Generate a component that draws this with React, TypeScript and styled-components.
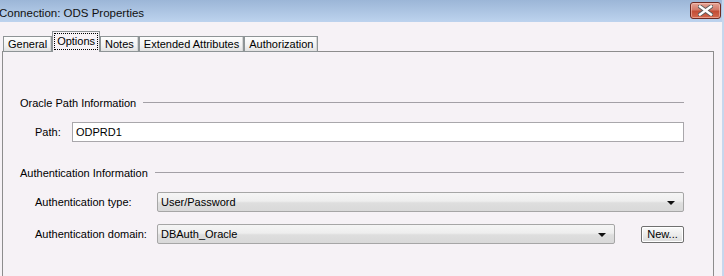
import React from "react";
import styled, { createGlobalStyle } from "styled-components";

const Global = createGlobalStyle`
  html, body { margin: 0; padding: 0; background: #f6f2f6; }
  body { font-family: "Liberation Sans", Arial, sans-serif; font-size: 11px; color: #000; }
  * { box-sizing: border-box; }
`;

const Window = styled.div`
  width: 724px;
  height: 276px;
  overflow: hidden;
  display: flex;
  flex-direction: column;
  background: #f6f2f6;
  border-right: 2px solid #c6d7ed;
`;

const TitleBar = styled.div`
  height: 22px;
  flex: none;
  display: flex;
  align-items: center;
  justify-content: space-between;
  padding: 0 1px 0 0;
  background: linear-gradient(#9cb6d7, #bdd3ee);
`;

const Title = styled.div`
  font-size: 11.5px;
  margin-left: -1px;
  margin-top: 3px;
  color: #111;
`;

const CloseButton = styled.div`
  width: 31px;
  height: 17px;
  margin-top: -2px;
  border: 1px solid #6e2a22;
  border-radius: 3px;
  background: linear-gradient(#e5a597 0%, #d37a69 45%, #c24d36 55%, #d46a4f 100%);
  display: flex;
  align-items: center;
  justify-content: center;
  box-shadow: inset 0 0 0 1px rgba(255, 210, 200, 0.5);
`;

const Body = styled.div`
  flex: 1;
  display: flex;
  flex-direction: column;
  padding: 9px 8px 0 2px;
`;

const TabStrip = styled.div`
  display: flex;
  align-items: flex-end;
  height: 21px;
  padding-left: 1px;
  margin-bottom: -1px;
  position: relative;
  z-index: 1;
`;

const Tab = styled.div<{ $active?: boolean }>`
  height: ${(p) => (p.$active ? "21px" : "16px")};
  padding: ${(p) => (p.$active ? "0 1px 2px" : "0 4px")};
  display: flex;
  align-items: center;
  border: 1px solid #8e9496;
  border-bottom: ${(p) => (p.$active ? "none" : "1px solid #8e9496")};
  background: ${(p) =>
    p.$active ? "#f6f2f6" : "linear-gradient(#fdfdfd, #f2f2f2 60%, #e2e2e2)"};
  box-shadow: ${(p) => (p.$active ? "none" : "inset -1px 0 0 #d6d6d6")};
  white-space: nowrap;
`;

const Focus = styled.span`
  border: 1px dotted #000;
  padding: 1px 2px 2px;
  line-height: 12px;
`;

const Panel = styled.div`
  flex: 1;
  border: 1px solid #8d8d8d;
  border-bottom: none;
  padding: 44px 29px 0 17px;
  display: flex;
  flex-direction: column;
`;

const SectionHeading = styled.div<{ $gap: number }>`
  display: flex;
  align-items: center;
  height: 14px;
  margin-top: ${(p) => p.$gap}px;
  &::after {
    content: "";
    flex: 1;
    height: 1px;
    margin-left: 7px;
    margin-top: -1px;
    background: #a3a0a6;
  }
`;

const Row = styled.div<{ $top: number }>`
  display: flex;
  align-items: center;
  margin-top: ${(p) => p.$top}px;
  padding-left: 15px;
`;

const Label = styled.div<{ $w: number }>`
  width: ${(p) => p.$w}px;
  flex: none;
`;

const TextInput = styled.div`
  flex: 1;
  height: 20px;
  border: 1px solid #a9a7ab;
  background: #fff;
  padding-left: 3px;
  display: flex;
  align-items: center;
`;

const Combo = styled.div<{ $w?: number }>`
  ${(p) => (p.$w ? `width: ${p.$w}px; flex: none;` : "flex: 1;")}
  height: 20px;
  border: 1px solid #a6a6a6;
  border-radius: 2px;
  background: linear-gradient(#f5f5f5 0%, #eeeeee 45%, #dedede 55%, #d9d9d9 100%);
  display: flex;
  align-items: center;
  justify-content: space-between;
  padding: 0 8px 0 3px;
`;

const Arrow = styled.span`
  width: 0;
  height: 0;
  border-left: 4px solid transparent;
  border-right: 4px solid transparent;
  border-top: 4px solid #111;
  margin-top: 2px;
`;

const Button = styled.div`
  margin-left: 26px;
  width: 43px;
  height: 17px;
  border: 1px solid #707070;
  border-radius: 2px;
  background: linear-gradient(#fafafa, #ececec 50%, #dcdcdc);
  box-shadow: inset 0 0 0 1px #fff;
  display: flex;
  align-items: center;
  justify-content: center;
  font-size: 11px;
`;

const tabs = ["General", "Options", "Notes", "Extended Attributes", "Authorization"];

export default function App() {
  return (
    <>
      <Global />
      <Window>
        <TitleBar>
          <Title>Connection: ODS Properties</Title>
          <CloseButton>
            <svg width="15" height="11" viewBox="0 0 15 11">
              <path
                d="M2 1.5 L13 9.5 M13 1.5 L2 9.5"
                stroke="#5a5a5a"
                strokeWidth="4.2"
                strokeLinecap="square"
              />
              <path
                d="M2 1.5 L13 9.5 M13 1.5 L2 9.5"
                stroke="#fff"
                strokeWidth="2.4"
                strokeLinecap="square"
              />
            </svg>
          </CloseButton>
        </TitleBar>
        <Body>
          <TabStrip>
            {tabs.map((t) =>
              t === "Options" ? (
                <Tab key={t} $active>
                  <Focus>{t}</Focus>
                </Tab>
              ) : (
                <Tab key={t}>{t}</Tab>
              )
            )}
          </TabStrip>
          <Panel>
            <SectionHeading $gap={0}>Oracle Path Information</SectionHeading>
            <Row $top={12}>
              <Label $w={37}>Path:</Label>
              <TextInput>ODPRD1</TextInput>
            </Row>
            <SectionHeading $gap={24}>Authentication Information</SectionHeading>
            <Row $top={12}>
              <Label $w={122}>Authentication type:</Label>
              <Combo>
                User/Password
                <Arrow />
              </Combo>
            </Row>
            <Row $top={12}>
              <Label $w={122}>Authentication domain:</Label>
              <Combo $w={458}>
                DBAuth_Oracle
                <Arrow />
              </Combo>
              <Button>New...</Button>
            </Row>
          </Panel>
        </Body>
      </Window>
    </>
  );
}
